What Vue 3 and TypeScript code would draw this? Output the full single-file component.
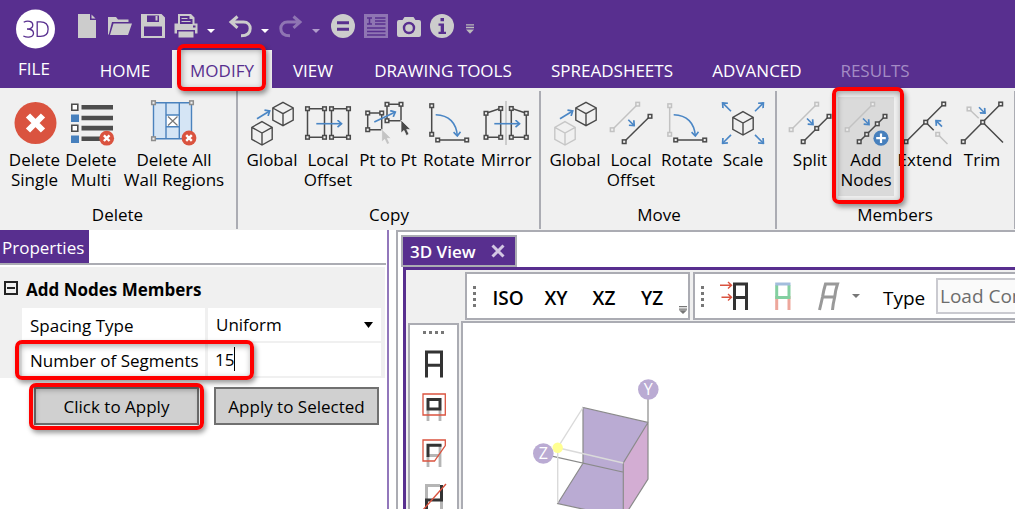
<script setup lang="ts">
import { ref } from 'vue'

interface Command {
  icon: string
  lines: string[]
  active?: boolean
}
interface Group {
  name: string
  key: string
  commands: Command[]
}

const tabs = ['HOME', 'MODIFY', 'VIEW', 'DRAWING TOOLS', 'SPREADSHEETS', 'ADVANCED', 'RESULTS']
const activeTab = ref('MODIFY')

const groups: Group[] = [
  {
    name: 'Delete',
    key: 'delete',
    commands: [
      { icon: 'delete-single', lines: ['Delete', 'Single'] },
      { icon: 'delete-multi', lines: ['Delete', 'Multi'] },
      { icon: 'delete-walls', lines: ['Delete All', 'Wall Regions'] },
    ],
  },
  {
    name: 'Copy',
    key: 'copy',
    commands: [
      { icon: 'copy-global', lines: ['Global'] },
      { icon: 'copy-local', lines: ['Local', 'Offset'] },
      { icon: 'copy-pt', lines: ['Pt to Pt'] },
      { icon: 'copy-rotate', lines: ['Rotate'] },
      { icon: 'copy-mirror', lines: ['Mirror'] },
    ],
  },
  {
    name: 'Move',
    key: 'move',
    commands: [
      { icon: 'move-global', lines: ['Global'] },
      { icon: 'move-local', lines: ['Local', 'Offset'] },
      { icon: 'move-rotate', lines: ['Rotate'] },
      { icon: 'move-scale', lines: ['Scale'] },
    ],
  },
  {
    name: 'Members',
    key: 'members',
    commands: [
      { icon: 'split', lines: ['Split'] },
      { icon: 'add-nodes', lines: ['Add', 'Nodes'], active: true },
      { icon: 'extend', lines: ['Extend'] },
      { icon: 'trim', lines: ['Trim'] },
    ],
  },
]

const views = ['ISO', 'XY', 'XZ', 'YZ']
const spacing = ref('Uniform')
const segments = ref('15')
const loadType = ref('Load Combination')
</script>

<template>
  <div class="app">
    <svg class="defs" width="0" height="0" aria-hidden="true">
      <defs>
        <marker id="head" viewBox="0 0 8 8" refX="6.5" refY="4" markerWidth="8" markerHeight="8" markerUnits="userSpaceOnUse" orient="auto">
          <path d="M2.5 0.5L6.5 4L2.5 7.5" fill="none" stroke="#4a86c5" stroke-width="1.7" />
        </marker>
        <rect id="node" x="-1.8" y="-1.8" width="3.6" height="3.6" fill="#f0f0f0" stroke="currentColor" stroke-width="1.5" />
        <path id="cube" d="M0-11.7L10.2-6V6L0 11.7L-10.2 6V-6ZM-10.2-6L0-0.3L10.2-6M0-0.3V11.7" fill="none" stroke="currentColor" stroke-width="1.4" />
        <path id="cursor" d="M0 0V13L3 10.4L5.3 15.5L8 14.3L5.7 9.4H9.6Z" fill="currentColor" stroke="#f7f7f7" stroke-width="0.7" />
        <g id="badge-x">
          <circle r="7.4" fill="#da533f" />
          <path d="M-2.8-2.8L2.8 2.8M2.8-2.8L-2.8 2.8" stroke="#fff" stroke-width="2.4" />
        </g>

        <g id="delete-single">
          <circle cx="24.5" cy="22" r="21" fill="#da533f" />
          <path d="M17 14.5L32 29.5M32 14.5L17 29.5" stroke="#fff" stroke-width="6" />
        </g>
        <g id="delete-multi">
          <path d="M14.5 4h31.5v4.6h-31.5zM14.5 14.7h31.5v4.6h-31.5zM14.5 24.8h31.5v4.6h-31.5zM14.5 35.4h24v4.6h-24z" fill="#4d4d4d" />
          <path d="M4.8 3.2h6v6h-6zM4.8 24.2h6v6h-6z" fill="#fff" stroke="#4d4d4d" stroke-width="1.6" />
          <path d="M4 13.5h8v7.5h-8zM4 34.5h8v7.5h-8z" fill="#4780bd" />
          <use href="#badge-x" x="39.7" y="37.2" />
        </g>
        <g id="delete-walls">
          <path d="M3.5 1.7H41.5V37.7H3.5Z" fill="#d5e5f5" />
          <path d="M16 14H29.3V25.7H16Z" fill="#fff" />
          <path d="M3.5 1.7H41.5V37.7H3.5ZM16 1.7V37.7M29.3 1.7V37.7M16 14H29.3M16 25.7H29.3" fill="none" stroke="#4a82bd" stroke-width="1.4" />
          <path d="M18 15.5L27.5 24.5M27.5 15.5L18 24.5" stroke="#777" stroke-width="1.2" />
          <g color="#8d8d8d"><use href="#node" x="3.5" y="1.7" /><use href="#node" x="41.5" y="1.7" /><use href="#node" x="3.5" y="37.7" /></g>
          <use href="#badge-x" x="39" y="37" />
        </g>

        <g id="copy-global">
          <use href="#cube" x="35" y="13" /><use href="#cube" x="14" y="32.3" />
          <path class="arrow" d="M9 17.7L21.7 10" />
        </g>
        <g id="copy-local">
          <path class="line" d="M3.5 7.7H20.5V36.3H3.5ZM27.5 7.7H44.5V36.3H27.5Z" />
          <use href="#node" x="3.5" y="7.7" /><use href="#node" x="20.5" y="7.7" /><use href="#node" x="3.5" y="36.3" /><use href="#node" x="20.5" y="36.3" />
          <use href="#node" x="27.5" y="7.7" /><use href="#node" x="44.5" y="7.7" /><use href="#node" x="27.5" y="36.3" /><use href="#node" x="44.5" y="36.3" />
          <path class="arrow" d="M12.3 22.7H37.5" />
        </g>
        <g id="copy-pt">
          <path class="line" d="M3.7 12H17.7V28.7H3.7ZM23 3.3H37V19.7H23Z" />
          <use href="#node" x="3.7" y="12" /><use href="#node" x="17.7" y="12" /><use href="#node" x="3.7" y="28.7" />
          <use href="#node" x="23" y="3.3" /><use href="#node" x="37" y="3.3" /><use href="#node" x="23" y="19.7" />
          <path class="arrow" d="M10.3 21L31.3 11" />
          <g color="#c4c4c4"><use href="#cursor" x="17.7" y="28" /></g>
          <use href="#cursor" x="37" y="19" />
        </g>
        <g id="copy-rotate">
          <path class="line" d="M6.7 4.7V33.3M12.7 39H41.7" />
          <use href="#node" x="6.7" y="4.7" /><use href="#node" x="6.7" y="33.3" /><use href="#node" x="12.7" y="39" /><use href="#node" x="41.7" y="39" />
          <path class="arrow" d="M10.7 13.7C24 14 31.5 22 32.3 35" />
        </g>
        <g id="copy-mirror">
          <path d="M24 0V44" stroke="#c8c8c8" stroke-width="1.8" />
          <path class="line" d="M4 12.3L18.7 7.3V36.3H4ZM44.3 12.3L29.3 7.3V36.3H44.3Z" />
          <use href="#node" x="4" y="12.3" /><use href="#node" x="18.7" y="7.5" /><use href="#node" x="4" y="36.3" /><use href="#node" x="18.7" y="36.3" />
          <use href="#node" x="44.3" y="12.3" /><use href="#node" x="29.3" y="7.5" /><use href="#node" x="44.3" y="36.3" /><use href="#node" x="29.3" y="36.3" />
          <path class="arrow" d="M12.3 22.7H37.5" />
        </g>

        <g id="move-global">
          <use href="#cube" x="35" y="13" />
          <g color="#c6c6c6"><use href="#cube" x="14" y="32.3" /></g>
          <path class="arrow" d="M9 17.7L21.7 10" />
        </g>
        <g id="ghost-member" color="#c2c2c2">
          <path class="line" d="M30.7 3.2L5.2 28.7" />
          <use href="#node" x="30.7" y="3.2" /><use href="#node" x="5.2" y="28.7" />
        </g>
        <g id="move-local">
          <use href="#ghost-member" />
          <path class="line" d="M43 15.3L17.2 40.7" />
          <use href="#node" x="43" y="15.3" /><use href="#node" x="17.2" y="40.7" />
          <path class="arrow" d="M21.3 18.7L27.2 24.6" />
        </g>
        <g id="move-rotate">
          <g color="#c2c2c2"><path class="line" d="M6.7 4.7V33.3" /><use href="#node" x="6.7" y="4.7" /><use href="#node" x="6.7" y="33.3" /></g>
          <path class="line" d="M12.7 39H41.7" />
          <use href="#node" x="12.7" y="39" /><use href="#node" x="41.7" y="39" />
          <path class="arrow" d="M10.7 13.7C24 14 31.5 22 32.3 35" />
        </g>
        <g id="move-scale">
          <use href="#cube" x="24" y="22.3" />
          <path class="arrow" d="M12 10.3L3.6 1.9" /><path class="arrow" d="M36 10.3L44.4 1.9" />
          <path class="arrow" d="M12 33.9L3.6 42.3" /><path class="arrow" d="M36 33.9L44.4 42.3" />
        </g>

        <g id="split">
          <use href="#ghost-member" />
          <path class="line" d="M43 15.3L17.2 40.7" />
          <use href="#node" x="43" y="15.3" /><use href="#node" x="30.7" y="27.4" /><use href="#node" x="17.2" y="40.7" />
          <path class="arrow" d="M21 17.5L27 23.5" />
        </g>
        <g id="add-nodes">
          <use href="#ghost-member" />
          <path class="line" d="M43 15.3L17.2 40.7" />
          <use href="#node" x="43" y="15.3" /><use href="#node" x="35.3" y="22.8" /><use href="#node" x="24.7" y="33.3" /><use href="#node" x="17.2" y="40.7" />
          <path class="arrow" d="M21 17.5L27 23.5" />
          <circle cx="39" cy="37.2" r="7.6" fill="#4780bd" />
          <path d="M34.2 37.2H43.8M39 32.4V42" stroke="#fff" stroke-width="2.2" />
        </g>
        <g id="extend">
          <path class="line" d="M42.7 3L5 40.7M24.7 21.3L32.7 29.3" />
          <use href="#node" x="42.7" y="3" /><use href="#node" x="24.7" y="21.2" /><use href="#node" x="5" y="40.7" />
          <g color="#c2c2c2"><path class="line" d="M36.7 33.3L46.5 43" /><use href="#node" x="36.7" y="33.3" /></g>
          <path class="arrow" d="M41 25.6L35 19.6" />
        </g>
        <g id="trim">
          <g color="#c2c2c2"><path class="line" d="M11 8L20.7 17.3" /><use href="#node" x="11" y="8" /></g>
          <path class="line" d="M42.7 3L5.3 40.7M24.7 21.3L45 41.5" />
          <use href="#node" x="42.7" y="3" /><use href="#node" x="24.7" y="21.2" /><use href="#node" x="5.3" y="40.7" />
          <path class="arrow" d="M21 6.2L27 12.2" />
        </g>
      </defs>
    </svg>

    <header class="title">
      <div class="quick">
        <button class="logo" aria-label="Application menu">
          <svg viewBox="0 0 40 40">
            <circle cx="19.5" cy="20" r="19.5" fill="#fff" />
            <path d="M7.7 13.3C11.5 11 16.8 12 16.8 16C16.8 19 14.5 20 11 20C15 20 17.5 21.2 17.5 24.2C17.5 28.4 11.5 29 7.3 27M21.2 12.8V27.4H24.5C30.1 27.4 32.1 24 32.1 20C32.1 16 30 12.8 24.5 12.8Z" fill="none" stroke="#582f8f" stroke-width="1.3" />
          </svg>
        </button>
        <button class="tool" aria-label="New"><svg viewBox="0 0 24 24"><path d="M3 0H15V6H21V24H3ZM16.5 0.5L20.5 4.5H16.5Z" fill="#ccc" /></svg></button>
        <button class="tool" aria-label="Open"><svg viewBox="0 0 24 24"><path d="M0 3H8L10 5.5H20.5V8H4L0.8 20.5H0ZM5.5 9.5H24L20 21H2Z" fill="#ccc" /></svg></button>
        <button class="tool" aria-label="Save"><svg viewBox="0 0 24 24"><path fill-rule="evenodd" d="M0 0H20.5L24 3.5V24H0ZM6 1.5V8H18V1.5ZM3 12.5V22H21V12.5Z" fill="#ccc" /><path d="M14.5 2H16.5V6.5H14.5Z" fill="#ccc" /></svg></button>
        <button class="tool" aria-label="Print"><svg viewBox="0 0 24 24"><path fill-rule="evenodd" d="M4 0H17L20.5 3.5V9.5H23.5V19.5H21V16H3V19.5H0.5V9.5H4ZM6 2V10H18.5V5H15.5V2ZM19 11.5V13.5H21.5V11.5ZM4.5 17.5H19.5V23.5H4.5Z" fill="#ccc" /><path d="M7.5 4.5H13.5M7.5 7.5H16.5" stroke="#ccc" stroke-width="1.2" /></svg></button>
        <button class="caret" aria-label="Print options"><svg viewBox="0 0 8 4"><path d="M0 0H8L4 4Z" fill="#fff" /></svg></button>
        <button class="tool undo" aria-label="Undo"><svg viewBox="0 0 24 24"><path d="M9.5 2.5L3 8L9.5 13.8M3.5 8H15.5C20 8 22.2 11 22.2 14.5C22.2 19 19.5 21.8 13 21.8" fill="none" stroke="#ccc" stroke-width="3" /></svg></button>
        <button class="caret" aria-label="Undo history"><svg viewBox="0 0 8 4"><path d="M0 0H8L4 4Z" fill="#fff" /></svg></button>
        <button class="tool redo" aria-label="Redo"><svg viewBox="0 0 24 24"><path d="M14.5 2.5L21 8L14.5 13.8M20.5 8H8.5C4 8 1.8 11 1.8 14.5C1.8 19 4.5 21.8 11 21.8" fill="none" stroke="#8f75b3" stroke-width="3" /></svg></button>
        <button class="caret" aria-label="Redo history"><svg viewBox="0 0 8 4"><path d="M0 0H8L4 4Z" fill="#b09ccb" /></svg></button>
        <button class="tool solve" aria-label="Solve"><svg viewBox="0 0 24 24"><circle cx="12" cy="12" r="12" fill="#ccc" /><path d="M6 8.7H18M6 15.3H18" stroke="#582f8f" stroke-width="3" /></svg></button>
        <button class="tool" aria-label="Report"><svg viewBox="0 0 24 24"><path d="M0 0H24V24H0Z" fill="#8f75b3" /><path d="M3 4H8M5.5 4V10M3 10H8M11 4H21.5M11 7H21.5M11 10H21.5M3 14H21.5M3 17.5H21.5M3 21H21.5" stroke="#582f8f" stroke-width="1.5" /></svg></button>
        <button class="tool" aria-label="Snapshot"><svg viewBox="0 0 24 24"><path d="M7.5 3H16.5L18.5 6H22Q24 6 24 8V21Q24 23 22 23H2Q0 23 0 21V8Q0 6 2 6H5.5Z" fill="#ccc" /><circle cx="12" cy="14" r="5" fill="none" stroke="#582f8f" stroke-width="2.4" /></svg></button>
        <button class="tool" aria-label="Information"><svg viewBox="0 0 24 24"><circle cx="12" cy="12" r="12" fill="#ccc" /><path d="M10.5 4H14V7.3H10.5ZM8.5 9.5H14V17.7H16V20H8.5V17.7H10.7V11.8H8.5Z" fill="#582f8f" /></svg></button>
        <button class="more" aria-label="Customize toolbar"><svg viewBox="0 0 8 10"><path d="M0 0.8H8M0 3.5H8" stroke="#bbb" stroke-width="1.3" /><path d="M0 5.5H8L4 9.8Z" fill="#bbb" /></svg></button>
      </div>
      <nav class="tabs">
        <button class="tab file">FILE</button>
        <button v-for="t in tabs" :key="t" class="tab" :class="{ on: t === activeTab, dim: t === 'RESULTS' }" @click="activeTab = t">
          {{ t }}<span v-if="t === 'MODIFY'" class="callout at-tab"></span>
        </button>
      </nav>
    </header>

    <section class="ribbon">
      <div v-for="g in groups" :key="g.key" class="group" :class="g.key">
        <div class="commands">
          <button v-for="c in g.commands" :key="c.icon" class="command" :class="{ active: c.active }">
            <svg class="glyph" viewBox="0 0 48 44"><use :href="'#' + c.icon" /></svg>
            <span v-for="l in c.lines" :key="l" class="line-text">{{ l }}</span>
            <span v-if="c.active" class="callout at-command"></span>
          </button>
        </div>
        <div class="group-name">{{ g.name }}</div>
      </div>
    </section>

    <main class="work">
      <aside class="side">
        <div class="panel-tabs"><h2 class="panel-tab">Properties</h2></div>
        <div class="props">
          <div class="props-head">
            <button class="fold" aria-label="Collapse"></button>
            <h3>Add Nodes Members</h3>
          </div>
          <div class="prop-row">
            <label for="spacing">Spacing Type</label>
            <div class="field">
              <select id="spacing" v-model="spacing"><option>Uniform</option></select>
              <svg class="drop" viewBox="0 0 9 6"><path d="M0 0H9L4.5 6Z" fill="#000" /></svg>
            </div>
          </div>
          <div class="prop-row">
            <label for="segments">Number of Segments</label>
            <div class="field number">
              <input id="segments" v-model="segments" type="text" />
              <span class="text-caret"></span>
            </div>
            <span class="callout at-row"></span>
          </div>
        </div>
        <div class="actions">
          <button class="action">Click to Apply<span class="callout at-action"></span></button>
          <button class="action">Apply to Selected</button>
        </div>
      </aside>

      <section class="dock">
        <div class="doc-tab">
          <h2>3D View</h2>
          <button class="close" aria-label="Close"><svg viewBox="0 0 14 14"><path d="M1.5 1.5L12.5 12.5M12.5 1.5L1.5 12.5" stroke="#d3c7e3" stroke-width="3" /></svg></button>
        </div>
        <div class="doc">
          <div class="bars">
            <div class="bar views">
              <span class="grip"><i></i><i></i><i></i><i></i></span>
              <button v-for="v in views" :key="v" class="view">{{ v }}</button>
              <svg class="overflow" viewBox="0 0 8 8"><path d="M0 0.7H8M0 3.2H8" stroke="#777" stroke-width="1.2" /><path d="M0 4.2H8L4 8Z" fill="#777" /></svg>
            </div>
            <div class="bar results">
              <span class="grip"><i></i><i></i><i></i><i></i></span>
              <button class="show" aria-label="Show loads"><svg viewBox="0 0 30 30"><path d="M14.5 29V3H26.5V29M14.5 16.5H26.5" fill="none" stroke="#333" stroke-width="3" /><path d="M0 4.2H11.5M8 1L11.5 4.2L8 7.4M1.5 16.2H11.5M8 13L11.5 16.2L8 19.4" fill="none" stroke="#da533f" stroke-width="1.4" /></svg></button>
              <button class="show" aria-label="Color members"><svg viewBox="0 0 30 30"><path d="M9.7 15V29M22 15V29" stroke="#eda79c" stroke-width="3" /><path d="M9.7 4V16.5H22V4" fill="none" stroke="#83cfa0" stroke-width="3" /><path d="M8.2 3H23.5" stroke="#a3bddd" stroke-width="3" /></svg></button>
              <button class="show" aria-label="Deflected shape"><svg viewBox="0 0 30 30"><path d="M5.5 29Q7 23 8.5 16Q9.7 9 11.5 3H23.5Q21.5 9 20.7 16Q19 23 18.5 29M8.5 16H20.7" fill="none" stroke="#999" stroke-width="3" /></svg></button>
              <button class="caret" aria-label="Deflection options"><svg viewBox="0 0 8 4"><path d="M0 0H8L4 4Z" fill="#777" /></svg></button>
              <label class="type" for="load-type">Type</label>
              <select id="load-type" v-model="loadType" class="load"><option>Load Combination</option></select>
            </div>
          </div>
          <div class="stage">
            <div class="rail">
              <span class="grip flat"><i></i><i></i><i></i><i></i></span>
              <button aria-label="Select all"><svg viewBox="0 0 28 34"><path d="M6.5 30.5V5H21.5V30.5M6.5 18.2H21.5" fill="none" stroke="#333" stroke-width="3" /></svg></button>
              <button aria-label="Box select"><svg viewBox="0 0 28 34"><path d="M8 20V31M20 20V31" stroke="#b5b5b5" stroke-width="2.8" /><path d="M8 9.5H20V19H8Z" fill="none" stroke="#333" stroke-width="3" /><path d="M3 4H25.3V25H3Z" fill="none" stroke="#da533f" stroke-width="1.3" /></svg></button>
              <button aria-label="Polygon select"><svg viewBox="0 0 28 34"><path d="M8 20V31M20 9V31M8 19.5H20" stroke="#b5b5b5" stroke-width="2.8" /><path d="M8 21V9.3H21.5" fill="none" stroke="#333" stroke-width="3" /><path d="M3 4H25.3V9.5L14.5 25H3Z" fill="none" stroke="#da533f" stroke-width="1.3" /></svg></button>
              <button aria-label="Line select"><svg viewBox="0 0 28 34"><path d="M6.5 17V3.5H20M21.5 18V31" fill="none" stroke="#b5b5b5" stroke-width="3" /><path d="M21.5 3V18H6.5V31" fill="none" stroke="#333" stroke-width="3" /><path d="M26 2L2 29" stroke="#da533f" stroke-width="1.4" /></svg></button>
            </div>
            <div class="canvas">
              <svg class="orient" viewBox="463 323 220 200" width="220" height="200">
                <path d="M583 407.5L648 422.5L623.3 463V518L557.7 503.5L583 463.3Z" fill="#baabd3" />
                <path d="M648 422.5L623.3 463V518L648 479Z" fill="#d3add3" />
                <path d="M583 463.3V407.5L648 422.5L623.3 463V518L557.7 503.5L583 463.3M648 399V479L623.3 518M553 456.3L622.7 472" fill="none" stroke="#8a8a8a" stroke-width="1.2" />
                <path d="M583 407.5L557.7 447.7V503M557.7 447.7L623.3 463" fill="none" stroke="#dadada" stroke-width="1.4" />
                <circle cx="648.3" cy="389.5" r="10.3" fill="#baabd3" />
                <circle cx="543.3" cy="453.5" r="10.3" fill="#baabd3" />
                <circle cx="557.7" cy="447.7" r="5.2" fill="#ffff92" />
                <text x="648.3" y="395">Y</text>
                <text x="543.3" y="459">Z</text>
              </svg>
            </div>
          </div>
        </div>
      </section>
    </main>
  </div>
</template>

<style>
html,
body {
  background: #fff;
}
</style>

<style scoped>
.app {
  display: flex;
  flex-direction: column;
  height: 100vh;
  overflow: hidden;
  font-family: 'Open Sans', 'Noto Sans', sans-serif;
  font-size: 17px;
  line-height: 20px;
  color: #000;
}
.app * {
  box-sizing: border-box;
}
.defs {
  position: absolute;
}
button {
  margin: 0;
  padding: 0;
  border: 0;
  background: none;
  font: inherit;
  color: inherit;
}
svg {
  display: block;
}
h2,
h3 {
  margin: 0;
  font-size: 17px;
}
.line {
  fill: none;
  stroke: currentColor;
  stroke-width: 1.5;
}
.arrow {
  fill: none;
  stroke: #4a86c5;
  stroke-width: 1.6;
  marker-end: url(#head);
}

.callout {
  position: absolute;
  z-index: 3;
  border: 4px solid #f00;
  border-radius: 7px;
  box-shadow: 2px 3px 5px rgba(0, 0, 0, 0.4), inset 1px 2px 6px rgba(0, 0, 0, 0.35);
  pointer-events: none;
}

.title {
  position: relative;
  z-index: 2;
  flex: none;
  background: #582f8f;
  color: #fff;
}
.quick {
  display: flex;
  align-items: flex-start;
  height: 50px;
  padding: 14px 0 0 16px;
}
.logo {
  width: 40px;
  height: 40px;
  margin: -5px 19px 0 0;
}
.tool {
  width: 24px;
  height: 24px;
  margin-right: 9px;
}
.caret {
  width: 8px;
  margin-top: 15px;
}
.caret svg {
  height: 4px;
}
.undo {
  margin: 0 9px 0 13px;
}
.redo {
  margin: 0 9px 0 10px;
}
.solve {
  margin-left: 11px;
}
.more {
  width: 8px;
  margin: 10px 0 0 3px;
}
.tabs {
  display: grid;
  grid-template-columns: 78px 94px 100px 82px 178px 160px 130px 106px;
}
.tab {
  position: relative;
  height: 38px;
  padding-top: 3px;
  white-space: nowrap;
}
.tab.file {
  padding: 0 10px 0 0;
}
.tab.on {
  background: #f0f0f0;
  color: #582f8f;
}
.tab.dim {
  color: #a48bc5;
}
.at-tab {
  inset: -6px 6px -3px 5px;
}

.ribbon {
  display: flex;
  flex: none;
  background: #f0f0f0;
}
.group {
  flex: none;
  margin: 3px 0 1px;
  padding: 6px 6px 0 5px;
  border-right: 2px solid #abacb3;
}
.commands {
  display: grid;
}
.delete .commands {
  grid-template-columns: 57px 56px 110px;
}
.delete {
  padding: 6px 7px 0 6px;
}
.copy .commands {
  grid-template-columns: 56px 56px 64px 58px 56px;
}
.copy {
  padding: 6px 5px 0 6px;
}
.move .commands {
  grid-template-columns: 56px 56px 56px 56px;
}
.move {
  padding: 6px 4px 0 6px;
}
.members .commands {
  grid-template-columns: 56px 56px 62px 52px;
}
.command {
  position: relative;
  display: flex;
  flex-direction: column;
  align-items: center;
  height: 99px;
  padding-top: 4px;
}
.command.active {
  background: #dadada;
}
.glyph {
  flex: none;
  width: 48px;
  height: 44px;
  margin-bottom: 5px;
  color: #4a4a4a;
  overflow: visible;
}
.line-text {
  white-space: nowrap;
}
.at-command {
  inset: -10px -10px -8px -6px;
}
.group-name {
  padding: 9px 0 4px;
  text-align: center;
}

.work {
  display: flex;
  flex: 1;
  min-height: 0;
}
.side {
  flex: none;
  width: 389px;
  border-right: 2px solid #9277bb;
}
.panel-tabs {
  display: flex;
  height: 35px;
  margin-right: 1px;
  border-bottom: 2px solid #abacb3;
}
.panel-tab {
  padding: 8px 5px 0 2px;
  background: #582f8f;
  color: #fff;
  font-weight: 400;
}
.props {
  margin: 2px 2px 0 0;
  padding: 0 4px 2px 22px;
  background: #f0f0f0;
}
.props-head {
  display: flex;
  align-items: center;
  gap: 8px;
  height: 41px;
  margin-left: -18px;
  padding-top: 4px;
}
.fold {
  display: flex;
  align-items: center;
  justify-content: center;
  width: 14px;
  height: 14px;
  margin-bottom: 4px;
  border: 2px solid #222;
}
.fold::after {
  content: '';
  width: 8px;
  height: 2px;
  background: #222;
}
.prop-row {
  position: relative;
  display: grid;
  grid-template-columns: 183px 1fr;
  gap: 3px;
  height: 33px;
}
.prop-row + .prop-row {
  margin-top: 2px;
}
.prop-row label {
  padding: 8px 0 0 8px;
  background: #fff;
  white-space: nowrap;
}
.field {
  position: relative;
  background: #fff;
}
.field select,
.field input {
  width: 100%;
  height: 33px;
  padding: 0 8px;
  border: 0;
  outline: 0;
  background: none;
  appearance: none;
  font: inherit;
  color: inherit;
}
.field.number input {
  padding: 0 7px;
}
.drop {
  position: absolute;
  top: 14px;
  right: 8px;
  width: 9px;
  height: 6px;
}
.text-caret {
  position: absolute;
  top: 4px;
  left: 26px;
  width: 1px;
  height: 24px;
  background: #000;
}
.at-row {
  inset: -3px 127px -4px -7px;
}
.actions {
  display: grid;
  grid-template-columns: 1fr 1fr;
  gap: 15px;
  margin: 9px 8px 0 34px;
}
.action {
  position: relative;
  height: 38px;
  padding-top: 2px;
  border: 2px solid #707070;
  background: #d0d0d0;
  white-space: nowrap;
}
.at-action {
  inset: -6px -7px -7px -7px;
}

.dock {
  display: flex;
  flex: 1;
  flex-direction: column;
  min-width: 0;
  margin-left: 7px;
  padding: 3px 0 0 3px;
  border: solid #abacb3;
  border-width: 2px 0 0 2px;
}
.doc-tab {
  display: flex;
  flex: none;
  align-self: flex-start;
  align-items: center;
  gap: 15px;
  height: 32px;
  padding: 0 10px 0 7px;
  border: 2px solid #abacb3;
  background: #582f8f;
  color: #fff;
}
.doc-tab h2 {
  padding-top: 2px;
  font-weight: 600;
}
.close {
  width: 14px;
  height: 14px;
}
.doc {
  display: flex;
  flex: 1;
  flex-direction: column;
  min-width: 0;
  min-height: 0;
  margin-left: 2px;
  border: solid #582f8f;
  border-width: 3px 0 0 3px;
  background: #f0f0f0;
}
.bars {
  display: flex;
  gap: 3px;
  flex: none;
  height: 48px;
  margin: 2px 0 1px 59px;
  overflow: hidden;
}
.bar {
  position: relative;
  display: flex;
  align-items: center;
  flex: none;
  border: 2px solid #abacb3;
  background: #fff;
  font-size: 19px;
}
.views {
  width: 225px;
}
.results {
  flex: 1 0 340px;
  border-right: 0;
}
.grip {
  display: flex;
  flex: none;
  flex-direction: column;
  gap: 3px;
  margin-left: 6px;
}
.grip i {
  width: 3px;
  height: 3px;
  background: #777;
}
.grip.flat {
  flex-direction: row;
  margin: 6px 0 7px;
}
.view {
  width: 48px;
  padding-top: 4px;
  font-weight: 600;
  color: #000;
}
.view:first-of-type {
  margin-left: 8px;
}
.overflow {
  position: absolute;
  right: 1px;
  bottom: 4px;
  width: 8px;
  height: 8px;
}
.show {
  flex: none;
  width: 30px;
  height: 30px;
  margin-right: 17px;
}
.results .grip + .show {
  margin-left: 16px;
}
.results .caret {
  flex: none;
  margin: 0 23px 0 -9px;
}
.type {
  flex: none;
  width: 53px;
  padding-top: 4px;
}
.load {
  flex: none;
  width: 200px;
  height: 36px;
  padding: 0 2px;
  border: 2px solid #cacad0;
  background: #fafafa;
  appearance: none;
  font: inherit;
  color: #6d6d6d;
}
.stage {
  display: flex;
  flex: 1;
  gap: 2px;
  min-height: 0;
}
.rail {
  display: flex;
  flex: none;
  flex-direction: column;
  align-items: center;
  width: 51px;
  margin: 2px 0 0 2px;
  border: 2px solid #abacb3;
  border-bottom: 0;
  background: #fff;
  overflow: hidden;
}
.rail button {
  flex: none;
  width: 28px;
  height: 34px;
  margin-bottom: 12px;
}
.rail .grip + button {
  margin: 6px 0 9px;
}
.canvas {
  flex: 1;
  border: solid #abacb3;
  border-width: 2px 0 0 2px;
  background: #fff;
  overflow: hidden;
}
.orient text {
  fill: #fff;
  font-size: 16px;
  text-anchor: middle;
}
</style>
